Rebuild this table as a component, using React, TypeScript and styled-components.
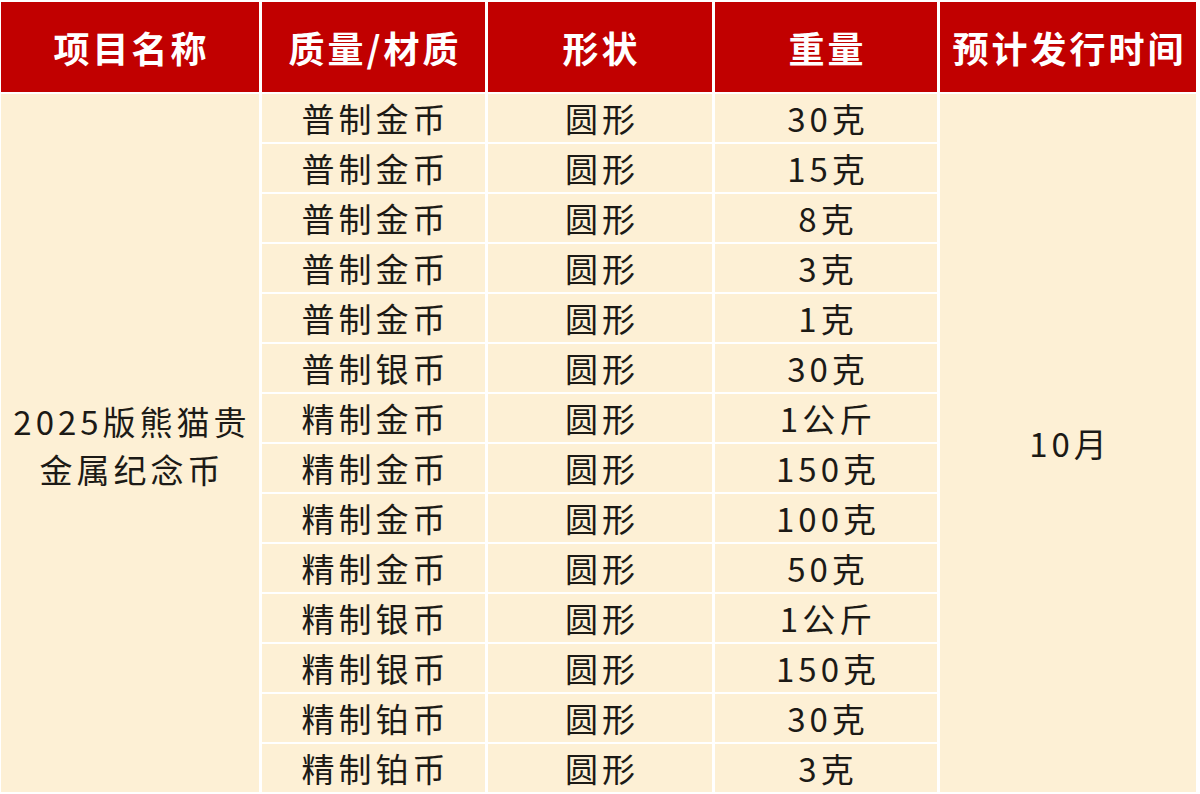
import React from "react";
import styled, { createGlobalStyle } from "styled-components";

const GlobalStyle = createGlobalStyle`
  html, body {
    margin: 0;
    padding: 0;
    background: #ffffff;
  }
  body {
    font-family: "Noto Sans CJK SC", "Noto Sans", sans-serif;
  }
`;

const Table = styled.div`
  display: grid;
  grid-template-columns: 258px 223px 224px 222px 1fr;
  grid-template-rows: 90px repeat(14, 48px);
  column-gap: 3px;
  row-gap: 2px;
  padding: 2px 4px 2px 1px;
  width: 1200px;
  box-sizing: border-box;
  background: #ffffff;
`;

const HeadCell = styled.div`
  background: #c10000;
  color: #ffffff;
  font-family: "Noto Sans CJK SC", sans-serif;
  font-weight: 700;
  font-size: 36px;
  letter-spacing: 3px;
  padding-left: 3px;
  display: flex;
  align-items: center;
  justify-content: center;
  white-space: nowrap;
`;

const Cell = styled.div<{ $col: number; $span?: number }>`
  grid-column: ${(p) => p.$col};
  grid-row: ${(p) => (p.$span ? `2 / span ${p.$span}` : "auto")};
  background: #fdf0d5;
  color: #1c1a16;
  font-family: "Noto Sans CJK SC", sans-serif;
  font-weight: 400;
  font-size: 33px;
  letter-spacing: 4px;
  padding-left: 4px;
  line-height: 48px;
  display: flex;
  align-items: center;
  justify-content: center;
  text-align: center;
  white-space: nowrap;
`;

const NameText = styled.div`
  line-height: 48px;
  margin-top: 4px;
`;

const headers = ["项目名称", "质量/材质", "形状", "重量", "预计发行时间"];

const rows: [string, string, string][] = [
  ["普制金币", "圆形", "30克"],
  ["普制金币", "圆形", "15克"],
  ["普制金币", "圆形", "8克"],
  ["普制金币", "圆形", "3克"],
  ["普制金币", "圆形", "1克"],
  ["普制银币", "圆形", "30克"],
  ["精制金币", "圆形", "1公斤"],
  ["精制金币", "圆形", "150克"],
  ["精制金币", "圆形", "100克"],
  ["精制金币", "圆形", "50克"],
  ["精制银币", "圆形", "1公斤"],
  ["精制银币", "圆形", "150克"],
  ["精制铂币", "圆形", "30克"],
  ["精制铂币", "圆形", "3克"],
];

export default function App() {
  return (
    <>
      <GlobalStyle />
      <Table>
        {headers.map((h) => (
          <HeadCell key={h}>{h}</HeadCell>
        ))}
        <Cell $col={1} $span={14}>
          <NameText>
            2025版熊猫贵
            <br />
            金属纪念币
          </NameText>
        </Cell>
        <Cell $col={5} $span={14}>10月</Cell>
        {rows.map(([m, s, w], i) => (
          <React.Fragment key={i}>
            <Cell $col={2}>{m}</Cell>
            <Cell $col={3}>{s}</Cell>
            <Cell $col={4}>{w}</Cell>
          </React.Fragment>
        ))}
      </Table>
    </>
  );
}
